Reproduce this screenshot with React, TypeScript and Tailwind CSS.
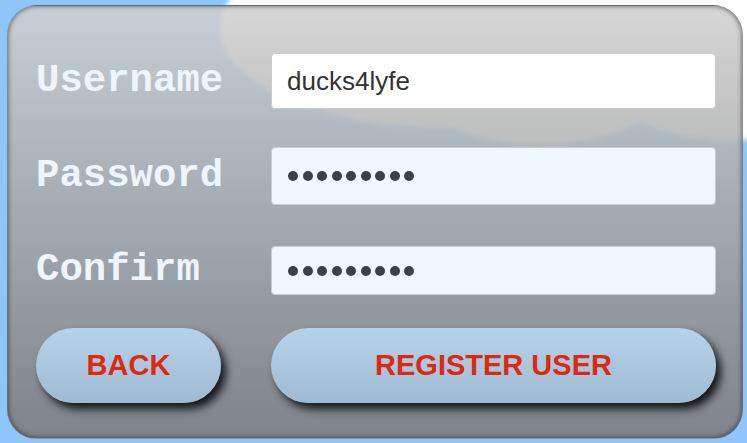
import React from "react";

const Dots = () => (
  <div className="flex items-center gap-[4.5px]">
    {Array.from({ length: 9 }).map((_, i) => (
      <span key={i} className="block w-[10px] h-[10px] rounded-full bg-[#3b4149]" />
    ))}
  </div>
);

const labelCls =
  "text-[39px] font-bold leading-none text-[#eef5fc] [font-family:'Liberation_Mono','Courier_New',monospace]";

const btnCls =
  "h-[75px] rounded-full bg-[linear-gradient(to_bottom,#b7d3ea,#9fbbd2)] shadow-[5px_6px_9px_rgba(0,0,0,0.85)] text-[29px] font-bold text-[#dd2812] [font-family:'Liberation_Sans',Arial,sans-serif]";

export default function App() {
  return (
    <div className="relative w-[747px] h-[443px] overflow-hidden bg-[#8ec6fc] pl-[7px] pt-[5px]">
      <svg className="absolute left-0 top-0" width="747" height="443" viewBox="0 0 747 443">
        <defs>
          <filter id="soft" x="-20%" y="-20%" width="140%" height="140%">
            <feGaussianBlur stdDeviation="2.5" />
          </filter>
        </defs>
        <g fill="#ffffff" filter="url(#soft)">
          <ellipse cx="450" cy="28" rx="230" ry="100" />
          <ellipse cx="540" cy="55" rx="150" ry="90" />
          <ellipse cx="730" cy="50" rx="150" ry="90" />
        </g>
      </svg>

      <div className="relative w-[736px] h-[434px] rounded-[30px] border border-[rgba(70,70,70,0.45)] bg-[linear-gradient(to_bottom,rgba(208,208,208,0.86),rgba(125,127,130,0.94))] shadow-[inset_0_0_5px_rgba(0,0,0,0.55)] pl-[28px] pr-[27px] pt-[47px]">
        <div className="grid grid-cols-[235px_1fr]">
          <div className="h-[56px] flex items-center">
            <span className={labelCls}>Username</span>
          </div>
          <div className="h-[56px] rounded-[4px] border border-[#c9cccf] bg-white flex items-center pl-[15px]">
            <span className="text-[26px] leading-none text-[#333] [font-family:'Liberation_Sans',Arial,sans-serif]">
              ducks4lyfe
            </span>
          </div>

          <div className="h-[58px] mt-[38px] flex items-center">
            <span className={labelCls}>Password</span>
          </div>
          <div className="h-[58px] mt-[38px] rounded-[4px] border border-[#c9cccf] bg-[#f0f7fe] flex items-center pl-[16px]">
            <Dots />
          </div>

          <div className="h-[49px] mt-[41px] flex items-center">
            <span className={labelCls}>Confirm</span>
          </div>
          <div className="h-[49px] mt-[41px] rounded-[4px] border border-[#c9cccf] bg-[#f0f7fe] flex items-center pl-[16px]">
            <Dots />
          </div>

          <div className="mt-[33px]">
            <button className={`w-[185px] ${btnCls}`}>BACK</button>
          </div>
          <div className="mt-[33px]">
            <button className={`w-[445px] ${btnCls}`}>REGISTER USER</button>
          </div>
        </div>
      </div>
    </div>
  );
}
